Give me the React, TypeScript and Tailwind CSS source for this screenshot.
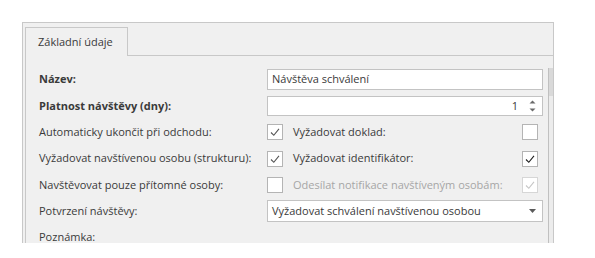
import React from "react";

function Check({ color }: { color: string }) {
  return (
    <svg width="14" height="14" viewBox="0 0 14 14" className="block">
      <polyline points="3,7.5 5.8,10.3 11,3.8" fill="none" stroke={color} strokeWidth="1.1" />
    </svg>
  );
}

function Box({ checked, disabled, dark }: { checked?: boolean; disabled?: boolean; dark?: boolean }) {
  return (
    <div
      className={
        "w-[16px] h-[16px] shrink-0 bg-white border flex items-center justify-center " +
        (disabled ? "border-[#d6d6d6]" : "border-[#b4b4b4]")
      }
    >
      {checked && <Check color={disabled ? "#c6c6c6" : dark ? "#1e1e1e" : "#555555"} />}
    </div>
  );
}

export default function App() {
  return (
    <div className="w-[595px] h-[258px] bg-white overflow-hidden font-['Open_Sans',sans-serif] text-[11px] text-[#3a3a3a]">
      <div className="ml-[22px] pt-[22px]">
        <div className="w-[532px] h-[221px] border border-b-0 border-[#c8c8c8] bg-[#f0f0f0] flex flex-col overflow-hidden pl-[2px]">
          {/* tab header */}
          <div className="flex h-[33px] pt-[4px] shrink-0">
            <div className="h-[29px] w-[103px] border border-b-0 border-[#c8c8c8] bg-[#f0f0f0] pl-[12px] flex items-center text-[#3a3a3a]">
              Základní údaje
            </div>
            <div className="flex-1 h-[29px] border-b border-[#c8c8c8]" />
          </div>
          {/* content */}
          <div className="flex flex-1 border-l border-[#c8c8c8]">
            <div className="flex-1 pt-[10px] pl-[13px]">
              {/* Název */}
              <div className="flex items-center h-[27px]">
                <div className="w-[228px] font-bold">Název:</div>
                <div className="w-[276px] h-[21px] bg-white border border-[#c3c3c3] flex items-center pl-[4px]">
                  Návštěva schválení
                </div>
              </div>
              {/* Platnost */}
              <div className="flex items-center h-[26px]">
                <div className="w-[228px] font-bold">Platnost návštěvy (dny):</div>
                <div className="w-[276px] h-[20px] bg-white border border-[#c3c3c3] flex items-center justify-end pr-[6px]">
                  <span className="mr-[11px]">1</span>
                  <svg width="7" height="14" viewBox="0 0 7 14" className="block">
                    <polygon points="0.5,4.5 6.5,4.5 3.5,1.5" fill="#6a6a6a" />
                    <polygon points="0.5,9.5 6.5,9.5 3.5,12.5" fill="#6a6a6a" />
                  </svg>
                </div>
              </div>
              {/* row 3 */}
              <div className="flex items-center h-[26px]">
                <div className="w-[228px]">Automaticky ukončit při odchodu:</div>
                <div className="w-[276px] flex items-center">
                  <Box checked />
                  <div className="ml-[10px] flex-1">Vyžadovat doklad:</div>
                  <div className="mr-[5px]">
                    <Box />
                  </div>
                </div>
              </div>
              {/* row 4 */}
              <div className="flex items-center h-[27px]">
                <div className="w-[228px]">Vyžadovat navštívenou osobu (strukturu):</div>
                <div className="w-[276px] flex items-center">
                  <Box checked />
                  <div className="ml-[10px] flex-1">Vyžadovat identifikátor:</div>
                  <div className="mr-[5px]">
                    <Box checked dark />
                  </div>
                </div>
              </div>
              {/* row 5 */}
              <div className="flex items-center h-[26px]">
                <div className="w-[228px]">Navštěvovat pouze přítomné osoby:</div>
                <div className="w-[276px] flex items-center">
                  <Box />
                  <div className="ml-[10px] flex-1 text-[#a6a6a6]">Odesílat notifikace navštíveným osobám:</div>
                  <div className="mr-[5px]">
                    <Box checked disabled />
                  </div>
                </div>
              </div>
              {/* row 6 */}
              <div className="flex items-center h-[26px]">
                <div className="w-[228px]">Potvrzení návštěvy:</div>
                <div className="w-[276px] h-[22px] bg-white border border-[#c3c3c3] flex items-center pl-[4px] pr-[6px]">
                  <span className="flex-1">Vyžadovat schválení navštívenou osobou</span>
                  <svg width="7" height="4" viewBox="0 0 7 4" className="block">
                    <polygon points="0,0 7,0 3.5,4" fill="#5a5a5a" />
                  </svg>
                </div>
              </div>
              {/* row 7 */}
              <div className="mt-[7px] leading-[12px] h-[12px]">Poznámka:</div>
            </div>
            {/* scrollbar */}
            <div className="w-[5px] mt-[12px] border-l border-[#c0c0c0] bg-[#ececec] flex flex-col">
              <div className="h-[28px] bg-[#d9d9d9]" />
            </div>
          </div>
        </div>
      </div>
    </div>
  );
}
